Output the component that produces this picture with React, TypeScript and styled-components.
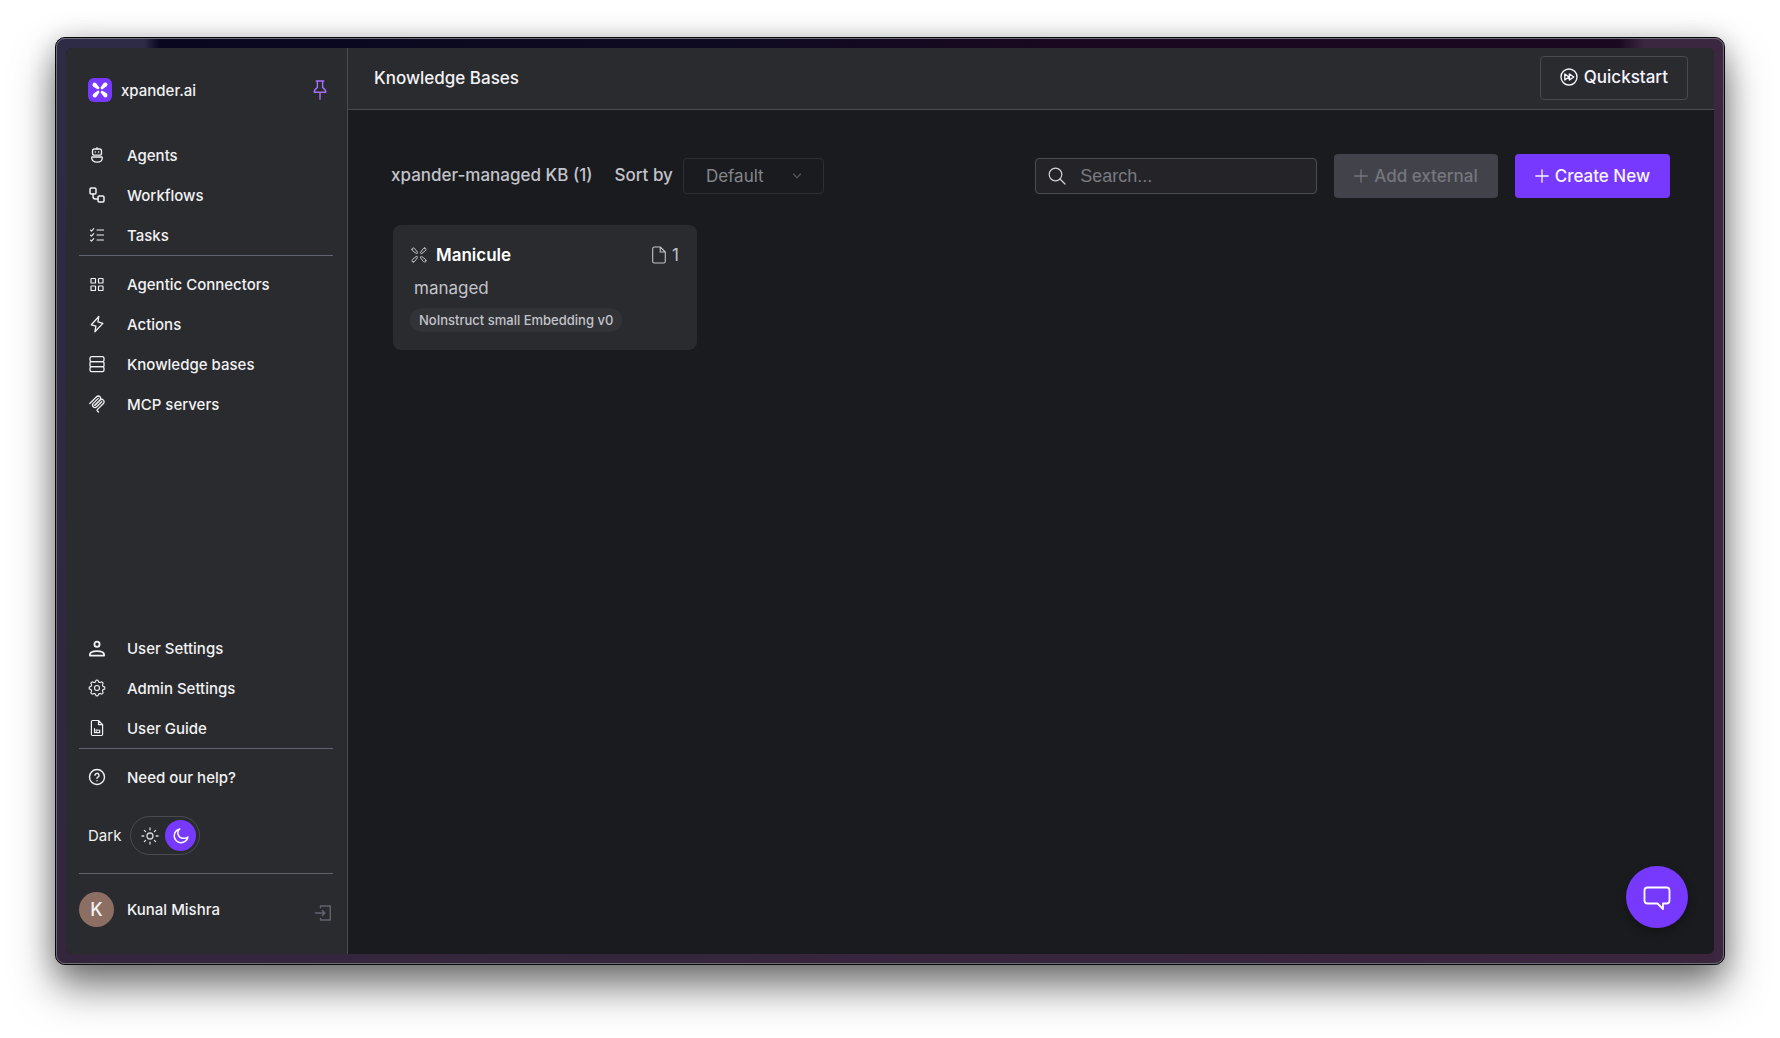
import React from "react";
import styled, { createGlobalStyle } from "styled-components";

const GlobalStyle = createGlobalStyle`
  * { box-sizing: border-box; }
  body { margin: 0; background: #ffffff; }
  body, button, input, select {
    font-family: Inter, "Liberation Sans", sans-serif;
  }
`;

const colors = {
  panel: "#2a2b2e",
  canvas: "#1a1b1e",
  line: "#4a4b4e",
  divider: "#60646f",
  text: "#f2f2f4",
  soft: "#c3c3ca",
  accent: "#7839ff",
};

const Page = styled.div`
  display: flex;
  min-height: 100vh;
  padding: 37px 55px 73px;
  overflow: hidden;
`;

const Frame = styled.div`
  flex: 1;
  display: flex;
  min-width: 0;
  padding: 10px;
  border: 1px solid #08080c;
  border-radius: 10px;
  outline: 1px solid #6d6d76;
  outline-offset: -2px;
  background:
    linear-gradient(90deg, transparent 88px, #08071f 104px, #0e0a22 40%, #19081f 60%, #19081f calc(100% - 106px), transparent calc(100% - 80px)) top / 100% 10px no-repeat,
    linear-gradient(90deg, transparent 10px, #33263c 10px, #3a253d calc(100% - 10px), transparent calc(100% - 10px)) bottom / 100% 10px no-repeat,
    linear-gradient(180deg, #2d2b45, #32263d) left / 50% 100% no-repeat,
    #3b2740;
  box-shadow: 0 22px 40px rgba(0, 0, 0, 0.52), 0 2px 26px rgba(0, 0, 0, 0.2);
`;

const Shell = styled.div`
  position: relative;
  flex: 1;
  display: flex;
  min-width: 0;
  overflow: hidden;
  border-radius: 6px;
  background: ${colors.canvas};
`;

const Sidebar = styled.aside`
  flex: 0 0 282px;
  display: flex;
  flex-direction: column;
  padding: 21px 14px 27px 13px;
  border-right: 1px solid ${colors.line};
  background: ${colors.panel};
  color: ${colors.text};
  font-size: 15px;
  font-weight: 500;
`;

const Brand = styled.div`
  display: flex;
  align-items: center;
  height: 42px;
  margin-bottom: 24px;
  padding: 0 3px 0 9px;
  gap: 9px;
`;

const BrandName = styled.span`
  flex: 1;
`;

const IconButton = styled.button<{ $tone: string }>`
  display: flex;
  padding: 0;
  border: 0;
  background: none;
  color: ${(p) => p.$tone};
  cursor: pointer;
`;

const NavList = styled.nav`
  display: flex;
  flex-direction: column;
`;

const NavLink = styled.a`
  display: flex;
  align-items: center;
  height: 40px;
  padding-left: 9px;
  gap: 21px;
  color: inherit;
  text-decoration: none;
`;

const Divider = styled.hr`
  width: 100%;
  height: 1px;
  margin: 0 0 8px;
  border: 0;
  background: ${colors.divider};
`;

const Spacer = styled.div`
  flex: 1;
`;

const ThemeRow = styled.div`
  display: flex;
  align-items: center;
  gap: 9px;
  margin: 19px 0 18px;
  padding-left: 9px;
  font-weight: 400;
`;

const Toggle = styled.button`
  display: flex;
  align-items: center;
  height: 39px;
  width: 70px;
  padding: 0 3px 0 10px;
  justify-content: space-between;
  border: 1px solid ${colors.line};
  border-radius: 20px;
  background: none;
  color: #d8d8dc;
  cursor: pointer;
`;

const Knob = styled.span`
  display: flex;
  align-items: center;
  justify-content: center;
  width: 31px;
  height: 31px;
  border-radius: 50%;
  background: ${colors.accent};
  color: #ffffff;
`;

const UserRow = styled.div`
  display: flex;
  align-items: center;
  padding: 10px 1px 0 0;
  gap: 13px;

  ${IconButton} { padding-top: 6px; }
`;

const Avatar = styled.span`
  display: flex;
  align-items: center;
  justify-content: center;
  width: 35px;
  height: 35px;
  border-radius: 50%;
  background: #8d6e63;
  font-size: 18px;
`;

const UserName = styled.span`
  flex: 1;
`;

const Main = styled.main`
  flex: 1;
  min-width: 0;
`;

const Header = styled.header`
  display: flex;
  align-items: center;
  justify-content: space-between;
  height: 62px;
  padding: 0 26px 2px;
  border-bottom: 1px solid ${colors.line};
  background: ${colors.panel};
`;

const Title = styled.h1`
  margin: 0;
  color: ${colors.text};
  font-size: 17px;
  font-weight: 500;
`;

const Button = styled.button<{ $kind: "outline" | "muted" | "primary" }>`
  display: flex;
  align-items: center;
  justify-content: center;
  height: 44px;
  padding: 0 19px 1px;
  gap: 6px;
  border: 1px solid ${(p) => (p.$kind === "outline" ? colors.line : "transparent")};
  border-radius: 4px;
  background: ${(p) => ({ outline: "transparent", muted: "#42424a", primary: colors.accent })[p.$kind]};
  color: ${(p) => (p.$kind === "muted" ? "#76767d" : "#f6f4ff")};
  font-size: 17px;
  font-weight: 500;
  white-space: nowrap;
`;

const Content = styled.section`
  padding: 44px 44px 44px 43px;
`;

const Toolbar = styled.div`
  display: flex;
  align-items: center;
  gap: 17px;
  color: ${colors.soft};
  font-size: 17px;
  font-weight: 500;
`;

const ListLabel = styled.span`
  padding: 0 5px 2px 0;
`;

const SortGroup = styled.div`
  display: flex;
  align-items: center;
  gap: 10px;
`;

const SortLabel = styled.label`
  padding-bottom: 2px;
`;

const SelectWrap = styled.span`
  display: grid;
  align-items: center;
  width: 141px;
  height: 36px;
  color: #85868b;

  > * { grid-area: 1 / 1; }
  > svg { justify-self: end; margin-right: 22px; color: #55565b; pointer-events: none; }
`;

const Select = styled.select`
  width: 100%;
  height: 100%;
  padding: 0 22px;
  appearance: none;
  border: 1px solid #2e2f33;
  border-radius: 4px;
  background: transparent;
  color: inherit;
  font-size: 17px;
  font-weight: 400;
`;

const SearchBox = styled.label`
  display: flex;
  align-items: center;
  width: 282px;
  height: 36px;
  margin-left: auto;
  padding: 0 12px;
  gap: 14px;
  border: 1px solid ${colors.line};
  border-radius: 4px;
  background: #242428;
  color: #d0d0d6;
`;

const SearchInput = styled.input`
  flex: 1;
  min-width: 0;
  padding: 0;
  border: 0;
  outline: 0;
  background: none;
  color: ${colors.text};
  font-family: "Liberation Sans", Arial, sans-serif;
  font-size: 18px;

  &::placeholder { color: #7a7a80; }
`;

const CardGrid = styled.div`
  display: grid;
  grid-template-columns: repeat(auto-fill, 304px);
  gap: 20px;
  margin-top: 27px;
  padding-left: 2px;
`;

const Card = styled.article`
  display: flex;
  flex-direction: column;
  align-items: flex-start;
  min-height: 125px;
  padding: 18px 17px 17px;
  border-radius: 8px;
  background: ${colors.panel};
  color: ${colors.soft};
  font-size: 17px;
  line-height: 24px;
`;

const CardHead = styled.div`
  display: flex;
  align-items: center;
  align-self: stretch;
  gap: 9px;
  padding: 0 1px;
`;

const CardTitle = styled.h2`
  flex: 1;
  margin: 0;
  color: #ffffff;
  font-size: 17px;
  font-weight: 600;
`;

const Count = styled.span`
  display: flex;
  align-items: center;
  gap: 4px;
`;

const Kind = styled.p`
  margin: 9px 0 8px;
  padding-left: 4px;
`;

const Pill = styled.span`
  padding: 0 9px;
  border-radius: 12px;
  background: #323337;
  font-size: 13px;
  font-weight: 500;
`;

const ChatButton = styled.button`
  position: absolute;
  right: 26px;
  bottom: 26px;
  display: flex;
  align-items: center;
  justify-content: center;
  width: 62px;
  height: 62px;
  padding: 0;
  border: 0;
  border-radius: 50%;
  background: ${colors.accent};
  color: #ffffff;
  box-shadow: 0 4px 10px rgba(0, 0, 0, 0.3);
`;

type IconProps = {
  children: React.ReactNode;
  size?: number;
  box?: string;
  stroke?: number;
};

const Icon = ({ children, size = 18, box = "0 0 18 18", stroke = 1.2 }: IconProps) => (
  <svg
    width={size}
    height={size}
    viewBox={box}
    fill="none"
    stroke="currentColor"
    strokeWidth={stroke}
    strokeLinecap="round"
    strokeLinejoin="round"
    aria-hidden="true"
  >
    {children}
  </svg>
);

const AgentIcon = () => (
  <Icon stroke={1.3}>
    <rect x="4.5" y="3" width="9" height="6.2" rx="2" />
    <path d="M9 1.600V3M7.300 6h.2M10.500 6h.2M4.300 11h9.400q.6 0 .6.7c0 2.700-2.200 4.500-5.300 4.500s-5.300-1.800-5.300-4.500q0-.7.6-.7z" />
  </Icon>
);

const WorkflowIcon = () => (
  <Icon stroke={1.5}>
    <rect x="2" y="2" width="6" height="6" rx="1.2" />
    <rect x="10" y="10" width="6" height="6" rx="1.2" />
    <path d="M5 8v2.500Q5 13 7.500 13H10" />
  </Icon>
);

const TasksIcon = () => (
  <Icon stroke={1.1}>
    <path d="M9 4h6.500M9 9h6.500M9 14h6.500M2.500 4.200l1 1 2.200-2.500M2.500 9.200l1 1 2.200-2.500M2.500 14.200l1 1 2.200-2.500" />
  </Icon>
);

const ConnectorsIcon = () => (
  <Icon stroke={1.2}>
    <rect x="3" y="3.500" width="4.500" height="4.500" rx=".6" />
    <rect x="10.500" y="3.500" width="4.500" height="4.500" rx=".6" />
    <rect x="3" y="11" width="4.500" height="4.500" rx=".6" />
    <rect x="10.500" y="11" width="4.500" height="4.500" rx=".6" />
  </Icon>
);

const BoltIcon = () => (
  <Icon stroke={1.3}>
    <path d="M10.800 1.500 3.300 9.800l4.600 1.400-1 5.600 8-8.400-5-1.600z" />
  </Icon>
);

const BasesIcon = () => (
  <Icon stroke={1.3}>
    <rect x="2" y="1.700" width="14" height="5" rx="1.600" />
    <rect x="2" y="6.700" width="14" height="5" rx="1.300" />
    <rect x="2" y="11.700" width="14" height="5" rx="1.600" />
  </Icon>
);

const McpIcon = () => (
  <Icon box="0 0 180 180" stroke={13}>
    <path d="M18 84.853 85.882 16.971c9.373-9.373 24.569-9.373 33.941 0 9.373 9.372 9.373 24.568 0 33.941L68.558 102.177" />
    <path d="m69.265 101.470 50.558-50.558c9.373-9.373 24.569-9.373 33.942 0l.353.353c9.373 9.373 9.373 24.569 0 33.941L92.725 146.600c-3.124 3.124-3.124 8.189 0 11.313l12.606 12.607" />
    <path d="M102.853 33.941 52.648 84.146c-9.372 9.372-9.372 24.568 0 33.941 9.373 9.372 24.569 9.372 33.941 0l50.205-50.205" />
  </Icon>
);

const PersonIcon = () => (
  <Icon stroke={1.8}>
    <circle cx="9" cy="5.200" r="2.600" />
    <path d="M1.900 16.600v-.8c0-2.500 3.300-3.700 7.100-3.700s7.100 1.200 7.100 3.700v.8z" />
  </Icon>
);

const gearPath = Array.from({ length: 48 }, (_, i) => {
  const angle = (i / 48) * Math.PI * 2;
  const radius = 7 + Math.max(-0.9, Math.min(0.9, 1.5 * Math.cos(angle * 8)));
  const x = (9 + radius * Math.sin(angle)).toFixed(2);
  const y = (9 - radius * Math.cos(angle)).toFixed(2);
  return `${i ? "L" : "M"}${x} ${y}`;
}).join("") + "Z";

const GearIcon = () => (
  <Icon stroke={1.1}>
    <path d={gearPath} />
    <circle cx="9" cy="9" r="2.500" />
  </Icon>
);

const GuideIcon = () => (
  <Icon>
    <path d="M10.500 1.500H4.600Q3.400 1.500 3.400 2.700v12.600q0 1.200 1.200 1.200h8.800q1.200 0 1.200-1.200V5.600zM10.500 1.500v4.100h4.100M6.500 9.500v4.200h5.200V11M8 11.200h2.200M8.300 13.200v-.6" />
  </Icon>
);

const HelpIcon = () => (
  <Icon stroke={1.4}>
    <circle cx="9" cy="9" r="7.500" />
    <path d="M7 7.300a2 2 0 1 1 2.900 1.800Q9 9.500 9 10.300M9 12.700v.1" />
  </Icon>
);

const PinIcon = () => (
  <Icon size={20} box="0 0 20 20" stroke={1.4}>
    <path d="M6.200 1h7.600M7.400 1v6.600Q4.200 9.200 4.200 12.300h11.600Q15.800 9.200 12.600 7.600V1M10 12.300v7" />
  </Icon>
);

const SunIcon = () => (
  <Icon stroke={1.3}>
    <circle cx="9" cy="9" r="3" />
    <path d="M9 1v1.800M9 15.200V17M1 9h1.800M15.200 9H17M3.400 3.400l1.200 1.200M13.400 13.400l1.200 1.200M14.600 3.400l-1.200 1.200M4.600 13.400l-1.200 1.200" />
  </Icon>
);

const MoonIcon = () => (
  <Icon stroke={1.5}>
    <path d="M7.800 2a6.900 6.900 0 1 0 8.100 8 5 5 0 0 1-4.200 1.200A5.200 5.200 0 0 1 7.800 2z" />
  </Icon>
);

const LogoutIcon = () => (
  <Icon stroke={1.4}>
    <path d="M6.500 3.500V2h9.800v14H6.500v-1.500M1.500 9h9.300M8.300 6.400 10.900 9l-2.600 2.600" />
  </Icon>
);

const ForwardIcon = () => (
  <Icon stroke={1.4}>
    <circle cx="9" cy="9" r="8" />
    <path d="M4.800 6v6L9 9zM9.400 6v6l4.400-3z" />
  </Icon>
);

const PlusIcon = () => (
  <Icon size={14} box="0 0 14 14" stroke={1.3}>
    <path d="M7 .8v12.400M.8 7h12.400" />
  </Icon>
);

const SearchIcon = () => (
  <Icon>
    <circle cx="7.500" cy="7.500" r="6.300" />
    <path d="m12 12 5 5" />
  </Icon>
);

const ChevronIcon = () => (
  <Icon size={10} box="0 0 10 10">
    <path d="M1.500 3 5 6.800 8.500 3" />
  </Icon>
);

const FileIcon = () => (
  <Icon stroke={1.1}>
    <path d="M10.200 1H4.500Q2.700 1 2.700 2.800v12.400Q2.700 17 4.500 17h9q1.800 0 1.800-1.800V6zM10.200 1v5h5.100" />
  </Icon>
);

const petals = [0, 90, 180, 270];

const BrandMark = () => (
  <svg width="24" height="24" viewBox="0 0 24 24" aria-hidden="true">
    <rect width="24" height="24" rx="6" fill={colors.accent} />
    {petals.map((turn) => (
      <path
        key={turn}
        transform={`rotate(${turn} 12 12)`}
        d="M4.600 7.200Q4.300 4.700 6.300 4.600q1.200 0 2 .9l3 4q.5 2-1.700 1.800L5.700 8.900Q4.800 8.300 4.600 7.200z"
        fill="#ffffff"
      />
    ))}
  </svg>
);

const PetalIcon = () => (
  <Icon size={16} box="0 0 16 16" stroke={1}>
    {petals.map((turn) => (
      <path
        key={turn}
        transform={`rotate(${turn} 8 8)`}
        d="M1 2.400Q.8 1 2.200 1q1 0 1.500.6l2.800 3.600q.5 1.400-1.200 1.200L1.900 4Q1.200 3.400 1 2.400z"
      />
    ))}
  </Icon>
);

const ChatIcon = () => (
  <Icon size={28} box="0 0 28 28" stroke={1.8}>
    <path d="M4.500 4.500h19Q26.500 4.500 26.500 7.500v10q0 3-3 3H20V26L14.500 20.500h-10q-3 0-3-3V7.500q0-3 3-3z" />
  </Icon>
);

type Entry = [string, React.ComponentType];

const workspaceLinks: Entry[] = [
  ["Agents", AgentIcon],
  ["Workflows", WorkflowIcon],
  ["Tasks", TasksIcon],
];

const resourceLinks: Entry[] = [
  ["Agentic Connectors", ConnectorsIcon],
  ["Actions", BoltIcon],
  ["Knowledge bases", BasesIcon],
  ["MCP servers", McpIcon],
];

const settingsLinks: Entry[] = [
  ["User Settings", PersonIcon],
  ["Admin Settings", GearIcon],
  ["User Guide", GuideIcon],
];

const helpLinks: Entry[] = [["Need our help?", HelpIcon]];

const NavGroup = ({ entries }: { entries: Entry[] }) => (
  <NavList>
    {entries.map(([label, Glyph]) => (
      <NavLink key={label} href="#">
        <Glyph />
        {label}
      </NavLink>
    ))}
  </NavList>
);

export default function App() {
  return (
    <Page>
      <GlobalStyle />
      <Frame>
        <Shell>
          <Sidebar>
            <Brand>
              <BrandMark />
              <BrandName>xpander.ai</BrandName>
              <IconButton $tone="#a370ff" aria-label="Pin sidebar">
                <PinIcon />
              </IconButton>
            </Brand>
            <NavGroup entries={workspaceLinks} />
            <Divider />
            <NavGroup entries={resourceLinks} />
            <Spacer />
            <NavGroup entries={settingsLinks} />
            <Divider />
            <NavGroup entries={helpLinks} />
            <ThemeRow>
              <span id="theme-label">Dark</span>
              <Toggle role="switch" aria-checked="true" aria-labelledby="theme-label">
                <SunIcon />
                <Knob>
                  <MoonIcon />
                </Knob>
              </Toggle>
            </ThemeRow>
            <Divider />
            <UserRow>
              <Avatar>K</Avatar>
              <UserName>Kunal Mishra</UserName>
              <IconButton $tone="#60646f" aria-label="Log out">
                <LogoutIcon />
              </IconButton>
            </UserRow>
          </Sidebar>
          <Main>
            <Header>
              <Title>Knowledge Bases</Title>
              <Button $kind="outline">
                <ForwardIcon />
                Quickstart
              </Button>
            </Header>
            <Content>
              <Toolbar>
                <ListLabel>xpander-managed KB (1)</ListLabel>
                <SortGroup>
                  <SortLabel htmlFor="sort">Sort by</SortLabel>
                  <SelectWrap>
                    <Select id="sort" defaultValue="Default">
                      <option>Default</option>
                    </Select>
                    <ChevronIcon />
                  </SelectWrap>
                </SortGroup>
                <SearchBox>
                  <SearchIcon />
                  <SearchInput type="text" placeholder="Search..." aria-label="Search" />
                </SearchBox>
                <Button $kind="muted" disabled>
                  <PlusIcon />
                  Add external
                </Button>
                <Button $kind="primary">
                  <PlusIcon />
                  Create New
                </Button>
              </Toolbar>
              <CardGrid>
                <Card>
                  <CardHead>
                    <PetalIcon />
                    <CardTitle>Manicule</CardTitle>
                    <Count>
                      <FileIcon />1
                    </Count>
                  </CardHead>
                  <Kind>managed</Kind>
                  <Pill>NoInstruct small Embedding v0</Pill>
                </Card>
              </CardGrid>
            </Content>
          </Main>
          <ChatButton aria-label="Open chat">
            <ChatIcon />
          </ChatButton>
        </Shell>
      </Frame>
    </Page>
  );
}
